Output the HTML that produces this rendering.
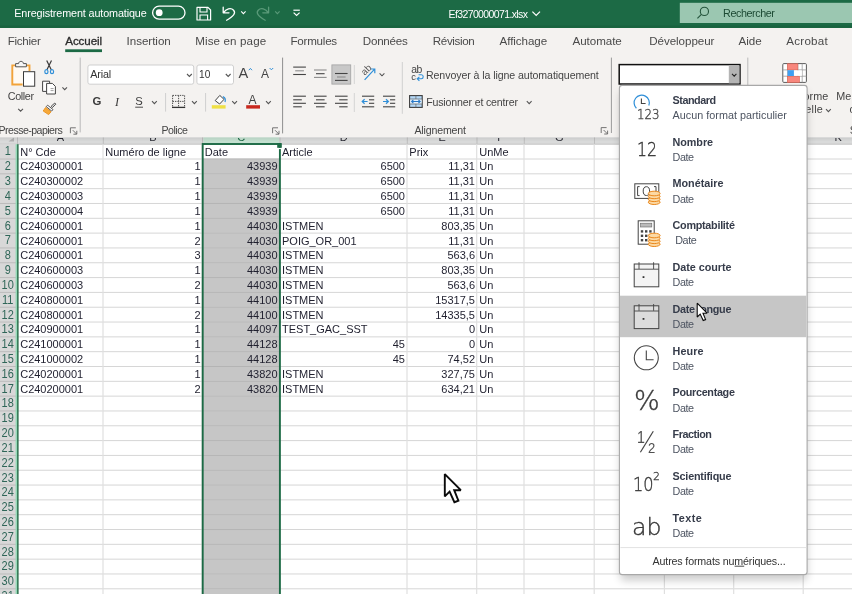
<!DOCTYPE html>
<html lang="fr"><head><meta charset="utf-8"><title>Ef3270000071.xlsx - Excel</title>
<style>
html,body{margin:0;padding:0;}
body{width:852px;height:594px;overflow:hidden;position:relative;background:#fff;font-family:"Liberation Sans", sans-serif;}
.ly{position:absolute;left:0;top:0;width:852px;height:594px;overflow:hidden;}
.ly svg{position:absolute;left:0;top:0;}
.t{position:absolute;white-space:pre;line-height:1;}
.ly{will-change:transform;}
</style></head><body>
<div class="ly" id="grid" style="">
<svg width="852" height="594" viewBox="0 0 852 594">
<rect x="0.00" y="128.00" width="852.00" height="16.20" fill="#d9dada" />
<rect x="203.40" y="128.00" width="75.80" height="16.20" fill="#c4e0d0" />
<line x1="17.50" y1="128.00" x2="17.50" y2="144.20" stroke="#bdbdbd" stroke-width="1" />
<line x1="103.30" y1="128.00" x2="103.30" y2="144.20" stroke="#bdbdbd" stroke-width="1" />
<line x1="202.50" y1="128.00" x2="202.50" y2="144.20" stroke="#bdbdbd" stroke-width="1" />
<line x1="280.00" y1="128.00" x2="280.00" y2="144.20" stroke="#bdbdbd" stroke-width="1" />
<line x1="407.30" y1="128.00" x2="407.30" y2="144.20" stroke="#bdbdbd" stroke-width="1" />
<line x1="477.00" y1="128.00" x2="477.00" y2="144.20" stroke="#bdbdbd" stroke-width="1" />
<line x1="524.30" y1="128.00" x2="524.30" y2="144.20" stroke="#bdbdbd" stroke-width="1" />
<line x1="594.50" y1="128.00" x2="594.50" y2="144.20" stroke="#bdbdbd" stroke-width="1" />
<line x1="664.70" y1="128.00" x2="664.70" y2="144.20" stroke="#bdbdbd" stroke-width="1" />
<line x1="734.00" y1="128.00" x2="734.00" y2="144.20" stroke="#bdbdbd" stroke-width="1" />
<line x1="803.50" y1="128.00" x2="803.50" y2="144.20" stroke="#bdbdbd" stroke-width="1" />
<line x1="873.00" y1="128.00" x2="873.00" y2="144.20" stroke="#bdbdbd" stroke-width="1" />
<line x1="0.00" y1="144.20" x2="852.00" y2="144.20" stroke="#c4c4c4" stroke-width="1" />
<rect x="0.00" y="144.20" width="17.50" height="449.80" fill="#d8d8d8" />
<path d="M14 137.5 L14 141.5 L8.5 141.5 Z" stroke="none" stroke-width="1" fill="#b0b0b0" />
<rect x="202.50" y="159.02" width="77.50" height="434.98" fill="#c6c6c6" />
<line x1="17.50" y1="159.02" x2="852.00" y2="159.02" stroke="#d6d6d6" stroke-width="1" />
<line x1="0.00" y1="159.02" x2="17.50" y2="159.02" stroke="#bcbcbc" stroke-width="1" />
<line x1="202.50" y1="159.02" x2="280.00" y2="159.02" stroke="#b4b4b4" stroke-width="1" />
<line x1="17.50" y1="173.84" x2="852.00" y2="173.84" stroke="#d6d6d6" stroke-width="1" />
<line x1="0.00" y1="173.84" x2="17.50" y2="173.84" stroke="#bcbcbc" stroke-width="1" />
<line x1="202.50" y1="173.84" x2="280.00" y2="173.84" stroke="#b4b4b4" stroke-width="1" />
<line x1="17.50" y1="188.66" x2="852.00" y2="188.66" stroke="#d6d6d6" stroke-width="1" />
<line x1="0.00" y1="188.66" x2="17.50" y2="188.66" stroke="#bcbcbc" stroke-width="1" />
<line x1="202.50" y1="188.66" x2="280.00" y2="188.66" stroke="#b4b4b4" stroke-width="1" />
<line x1="17.50" y1="203.48" x2="852.00" y2="203.48" stroke="#d6d6d6" stroke-width="1" />
<line x1="0.00" y1="203.48" x2="17.50" y2="203.48" stroke="#bcbcbc" stroke-width="1" />
<line x1="202.50" y1="203.48" x2="280.00" y2="203.48" stroke="#b4b4b4" stroke-width="1" />
<line x1="17.50" y1="218.30" x2="852.00" y2="218.30" stroke="#d6d6d6" stroke-width="1" />
<line x1="0.00" y1="218.30" x2="17.50" y2="218.30" stroke="#bcbcbc" stroke-width="1" />
<line x1="202.50" y1="218.30" x2="280.00" y2="218.30" stroke="#b4b4b4" stroke-width="1" />
<line x1="17.50" y1="233.12" x2="852.00" y2="233.12" stroke="#d6d6d6" stroke-width="1" />
<line x1="0.00" y1="233.12" x2="17.50" y2="233.12" stroke="#bcbcbc" stroke-width="1" />
<line x1="202.50" y1="233.12" x2="280.00" y2="233.12" stroke="#b4b4b4" stroke-width="1" />
<line x1="17.50" y1="247.94" x2="852.00" y2="247.94" stroke="#d6d6d6" stroke-width="1" />
<line x1="0.00" y1="247.94" x2="17.50" y2="247.94" stroke="#bcbcbc" stroke-width="1" />
<line x1="202.50" y1="247.94" x2="280.00" y2="247.94" stroke="#b4b4b4" stroke-width="1" />
<line x1="17.50" y1="262.76" x2="852.00" y2="262.76" stroke="#d6d6d6" stroke-width="1" />
<line x1="0.00" y1="262.76" x2="17.50" y2="262.76" stroke="#bcbcbc" stroke-width="1" />
<line x1="202.50" y1="262.76" x2="280.00" y2="262.76" stroke="#b4b4b4" stroke-width="1" />
<line x1="17.50" y1="277.58" x2="852.00" y2="277.58" stroke="#d6d6d6" stroke-width="1" />
<line x1="0.00" y1="277.58" x2="17.50" y2="277.58" stroke="#bcbcbc" stroke-width="1" />
<line x1="202.50" y1="277.58" x2="280.00" y2="277.58" stroke="#b4b4b4" stroke-width="1" />
<line x1="17.50" y1="292.40" x2="852.00" y2="292.40" stroke="#d6d6d6" stroke-width="1" />
<line x1="0.00" y1="292.40" x2="17.50" y2="292.40" stroke="#bcbcbc" stroke-width="1" />
<line x1="202.50" y1="292.40" x2="280.00" y2="292.40" stroke="#b4b4b4" stroke-width="1" />
<line x1="17.50" y1="307.22" x2="852.00" y2="307.22" stroke="#d6d6d6" stroke-width="1" />
<line x1="0.00" y1="307.22" x2="17.50" y2="307.22" stroke="#bcbcbc" stroke-width="1" />
<line x1="202.50" y1="307.22" x2="280.00" y2="307.22" stroke="#b4b4b4" stroke-width="1" />
<line x1="17.50" y1="322.04" x2="852.00" y2="322.04" stroke="#d6d6d6" stroke-width="1" />
<line x1="0.00" y1="322.04" x2="17.50" y2="322.04" stroke="#bcbcbc" stroke-width="1" />
<line x1="202.50" y1="322.04" x2="280.00" y2="322.04" stroke="#b4b4b4" stroke-width="1" />
<line x1="17.50" y1="336.86" x2="852.00" y2="336.86" stroke="#d6d6d6" stroke-width="1" />
<line x1="0.00" y1="336.86" x2="17.50" y2="336.86" stroke="#bcbcbc" stroke-width="1" />
<line x1="202.50" y1="336.86" x2="280.00" y2="336.86" stroke="#b4b4b4" stroke-width="1" />
<line x1="17.50" y1="351.68" x2="852.00" y2="351.68" stroke="#d6d6d6" stroke-width="1" />
<line x1="0.00" y1="351.68" x2="17.50" y2="351.68" stroke="#bcbcbc" stroke-width="1" />
<line x1="202.50" y1="351.68" x2="280.00" y2="351.68" stroke="#b4b4b4" stroke-width="1" />
<line x1="17.50" y1="366.50" x2="852.00" y2="366.50" stroke="#d6d6d6" stroke-width="1" />
<line x1="0.00" y1="366.50" x2="17.50" y2="366.50" stroke="#bcbcbc" stroke-width="1" />
<line x1="202.50" y1="366.50" x2="280.00" y2="366.50" stroke="#b4b4b4" stroke-width="1" />
<line x1="17.50" y1="381.32" x2="852.00" y2="381.32" stroke="#d6d6d6" stroke-width="1" />
<line x1="0.00" y1="381.32" x2="17.50" y2="381.32" stroke="#bcbcbc" stroke-width="1" />
<line x1="202.50" y1="381.32" x2="280.00" y2="381.32" stroke="#b4b4b4" stroke-width="1" />
<line x1="17.50" y1="396.14" x2="852.00" y2="396.14" stroke="#d6d6d6" stroke-width="1" />
<line x1="0.00" y1="396.14" x2="17.50" y2="396.14" stroke="#bcbcbc" stroke-width="1" />
<line x1="202.50" y1="396.14" x2="280.00" y2="396.14" stroke="#b4b4b4" stroke-width="1" />
<line x1="17.50" y1="410.96" x2="852.00" y2="410.96" stroke="#d6d6d6" stroke-width="1" />
<line x1="0.00" y1="410.96" x2="17.50" y2="410.96" stroke="#bcbcbc" stroke-width="1" />
<line x1="202.50" y1="410.96" x2="280.00" y2="410.96" stroke="#b4b4b4" stroke-width="1" />
<line x1="17.50" y1="425.78" x2="852.00" y2="425.78" stroke="#d6d6d6" stroke-width="1" />
<line x1="0.00" y1="425.78" x2="17.50" y2="425.78" stroke="#bcbcbc" stroke-width="1" />
<line x1="202.50" y1="425.78" x2="280.00" y2="425.78" stroke="#b4b4b4" stroke-width="1" />
<line x1="17.50" y1="440.60" x2="852.00" y2="440.60" stroke="#d6d6d6" stroke-width="1" />
<line x1="0.00" y1="440.60" x2="17.50" y2="440.60" stroke="#bcbcbc" stroke-width="1" />
<line x1="202.50" y1="440.60" x2="280.00" y2="440.60" stroke="#b4b4b4" stroke-width="1" />
<line x1="17.50" y1="455.42" x2="852.00" y2="455.42" stroke="#d6d6d6" stroke-width="1" />
<line x1="0.00" y1="455.42" x2="17.50" y2="455.42" stroke="#bcbcbc" stroke-width="1" />
<line x1="202.50" y1="455.42" x2="280.00" y2="455.42" stroke="#b4b4b4" stroke-width="1" />
<line x1="17.50" y1="470.24" x2="852.00" y2="470.24" stroke="#d6d6d6" stroke-width="1" />
<line x1="0.00" y1="470.24" x2="17.50" y2="470.24" stroke="#bcbcbc" stroke-width="1" />
<line x1="202.50" y1="470.24" x2="280.00" y2="470.24" stroke="#b4b4b4" stroke-width="1" />
<line x1="17.50" y1="485.06" x2="852.00" y2="485.06" stroke="#d6d6d6" stroke-width="1" />
<line x1="0.00" y1="485.06" x2="17.50" y2="485.06" stroke="#bcbcbc" stroke-width="1" />
<line x1="202.50" y1="485.06" x2="280.00" y2="485.06" stroke="#b4b4b4" stroke-width="1" />
<line x1="17.50" y1="499.88" x2="852.00" y2="499.88" stroke="#d6d6d6" stroke-width="1" />
<line x1="0.00" y1="499.88" x2="17.50" y2="499.88" stroke="#bcbcbc" stroke-width="1" />
<line x1="202.50" y1="499.88" x2="280.00" y2="499.88" stroke="#b4b4b4" stroke-width="1" />
<line x1="17.50" y1="514.70" x2="852.00" y2="514.70" stroke="#d6d6d6" stroke-width="1" />
<line x1="0.00" y1="514.70" x2="17.50" y2="514.70" stroke="#bcbcbc" stroke-width="1" />
<line x1="202.50" y1="514.70" x2="280.00" y2="514.70" stroke="#b4b4b4" stroke-width="1" />
<line x1="17.50" y1="529.52" x2="852.00" y2="529.52" stroke="#d6d6d6" stroke-width="1" />
<line x1="0.00" y1="529.52" x2="17.50" y2="529.52" stroke="#bcbcbc" stroke-width="1" />
<line x1="202.50" y1="529.52" x2="280.00" y2="529.52" stroke="#b4b4b4" stroke-width="1" />
<line x1="17.50" y1="544.34" x2="852.00" y2="544.34" stroke="#d6d6d6" stroke-width="1" />
<line x1="0.00" y1="544.34" x2="17.50" y2="544.34" stroke="#bcbcbc" stroke-width="1" />
<line x1="202.50" y1="544.34" x2="280.00" y2="544.34" stroke="#b4b4b4" stroke-width="1" />
<line x1="17.50" y1="559.16" x2="852.00" y2="559.16" stroke="#d6d6d6" stroke-width="1" />
<line x1="0.00" y1="559.16" x2="17.50" y2="559.16" stroke="#bcbcbc" stroke-width="1" />
<line x1="202.50" y1="559.16" x2="280.00" y2="559.16" stroke="#b4b4b4" stroke-width="1" />
<line x1="17.50" y1="573.98" x2="852.00" y2="573.98" stroke="#d6d6d6" stroke-width="1" />
<line x1="0.00" y1="573.98" x2="17.50" y2="573.98" stroke="#bcbcbc" stroke-width="1" />
<line x1="202.50" y1="573.98" x2="280.00" y2="573.98" stroke="#b4b4b4" stroke-width="1" />
<line x1="17.50" y1="588.80" x2="852.00" y2="588.80" stroke="#d6d6d6" stroke-width="1" />
<line x1="0.00" y1="588.80" x2="17.50" y2="588.80" stroke="#bcbcbc" stroke-width="1" />
<line x1="202.50" y1="588.80" x2="280.00" y2="588.80" stroke="#b4b4b4" stroke-width="1" />
<line x1="17.50" y1="603.62" x2="852.00" y2="603.62" stroke="#d6d6d6" stroke-width="1" />
<line x1="0.00" y1="603.62" x2="17.50" y2="603.62" stroke="#bcbcbc" stroke-width="1" />
<line x1="202.50" y1="603.62" x2="280.00" y2="603.62" stroke="#b4b4b4" stroke-width="1" />
<line x1="103.00" y1="144.20" x2="103.00" y2="594.00" stroke="#dfdfdf" stroke-width="1.2" />
<line x1="202.20" y1="144.20" x2="202.20" y2="594.00" stroke="#dfdfdf" stroke-width="1.2" />
<line x1="279.70" y1="144.20" x2="279.70" y2="594.00" stroke="#dfdfdf" stroke-width="1.2" />
<line x1="407.00" y1="144.20" x2="407.00" y2="594.00" stroke="#dfdfdf" stroke-width="1.2" />
<line x1="476.70" y1="144.20" x2="476.70" y2="594.00" stroke="#dfdfdf" stroke-width="1.2" />
<line x1="524.00" y1="144.20" x2="524.00" y2="594.00" stroke="#dfdfdf" stroke-width="1.2" />
<line x1="594.20" y1="144.20" x2="594.20" y2="594.00" stroke="#dfdfdf" stroke-width="1.2" />
<line x1="664.40" y1="144.20" x2="664.40" y2="594.00" stroke="#dfdfdf" stroke-width="1.2" />
<line x1="733.70" y1="144.20" x2="733.70" y2="594.00" stroke="#dfdfdf" stroke-width="1.2" />
<line x1="803.20" y1="144.20" x2="803.20" y2="594.00" stroke="#dfdfdf" stroke-width="1.2" />
<line x1="872.70" y1="144.20" x2="872.70" y2="594.00" stroke="#dfdfdf" stroke-width="1.2" />
<rect x="15.60" y="144.20" width="1.60" height="449.80" fill="#93d9b6" />
<rect x="17.10" y="144.20" width="1.50" height="449.80" fill="#2b704d" />
<rect x="202.70" y="144.00" width="77.20" height="460.00" fill="none" stroke="#1c6a45" stroke-width="1.9"/>
<rect x="278.60" y="147.80" width="2.80" height="1.30" fill="#fff" />
<rect x="277.20" y="143.10" width="4.60" height="4.70" fill="#1c6a45" />
</svg>
<span class="t" style="font-size:11px;color:#2a2a33;left:56.73px;top:131.59px;clip-path:inset(6.5px 0 0 0);">A</span>
<span class="t" style="font-size:11px;color:#2a2a33;left:149.23px;top:131.59px;clip-path:inset(6.5px 0 0 0);">B</span>
<span class="t" style="font-size:11px;color:#1c6a45;left:237.27px;top:131.59px;clip-path:inset(6.5px 0 0 0);">C</span>
<span class="t" style="font-size:11px;color:#2a2a33;left:339.67px;top:131.59px;clip-path:inset(6.5px 0 0 0);">D</span>
<span class="t" style="font-size:11px;color:#2a2a33;left:438.48px;top:131.59px;clip-path:inset(6.5px 0 0 0);">E</span>
<span class="t" style="font-size:11px;color:#2a2a33;left:497.28px;top:131.59px;clip-path:inset(6.5px 0 0 0);">F</span>
<span class="t" style="font-size:11px;color:#2a2a33;left:555.12px;top:131.59px;clip-path:inset(6.5px 0 0 0);">G</span>
<span class="t" style="font-size:11px;color:#2a2a33;left:625.62px;top:131.59px;clip-path:inset(6.5px 0 0 0);">H</span>
<span class="t" style="font-size:11px;color:#2a2a33;left:697.82px;top:131.59px;clip-path:inset(6.5px 0 0 0);">I</span>
<span class="t" style="font-size:11px;color:#2a2a33;left:766.00px;top:131.59px;clip-path:inset(6.5px 0 0 0);">J</span>
<span class="t" style="font-size:11px;color:#2a2a33;left:834.58px;top:131.59px;clip-path:inset(6.5px 0 0 0);">K</span>
<span class="t" style="font-size:11px;color:#2f6658;left:4.64px;top:146.49px;transform:scaleY(1.09);transform-origin:0 84.65%;">1</span>
<span class="t" style="font-size:11px;color:#2f6658;left:4.64px;top:161.31px;transform:scaleY(1.09);transform-origin:0 84.65%;">2</span>
<span class="t" style="font-size:11px;color:#2f6658;left:4.64px;top:176.13px;transform:scaleY(1.09);transform-origin:0 84.65%;">3</span>
<span class="t" style="font-size:11px;color:#2f6658;left:4.64px;top:190.95px;transform:scaleY(1.09);transform-origin:0 84.65%;">4</span>
<span class="t" style="font-size:11px;color:#2f6658;left:4.64px;top:205.77px;transform:scaleY(1.09);transform-origin:0 84.65%;">5</span>
<span class="t" style="font-size:11px;color:#2f6658;left:4.64px;top:220.59px;transform:scaleY(1.09);transform-origin:0 84.65%;">6</span>
<span class="t" style="font-size:11px;color:#2f6658;left:4.64px;top:235.41px;transform:scaleY(1.09);transform-origin:0 84.65%;">7</span>
<span class="t" style="font-size:11px;color:#2f6658;left:4.64px;top:250.23px;transform:scaleY(1.09);transform-origin:0 84.65%;">8</span>
<span class="t" style="font-size:11px;color:#2f6658;left:4.64px;top:265.05px;transform:scaleY(1.09);transform-origin:0 84.65%;">9</span>
<span class="t" style="font-size:11px;color:#2f6658;left:1.58px;top:279.87px;transform:scaleY(1.09);transform-origin:0 84.65%;">10</span>
<span class="t" style="font-size:11px;color:#2f6658;left:1.99px;top:294.69px;transform:scaleY(1.09);transform-origin:0 84.65%;">11</span>
<span class="t" style="font-size:11px;color:#2f6658;left:1.58px;top:309.51px;transform:scaleY(1.09);transform-origin:0 84.65%;">12</span>
<span class="t" style="font-size:11px;color:#2f6658;left:1.58px;top:324.33px;transform:scaleY(1.09);transform-origin:0 84.65%;">13</span>
<span class="t" style="font-size:11px;color:#2f6658;left:1.58px;top:339.15px;transform:scaleY(1.09);transform-origin:0 84.65%;">14</span>
<span class="t" style="font-size:11px;color:#2f6658;left:1.58px;top:353.97px;transform:scaleY(1.09);transform-origin:0 84.65%;">15</span>
<span class="t" style="font-size:11px;color:#2f6658;left:1.58px;top:368.79px;transform:scaleY(1.09);transform-origin:0 84.65%;">16</span>
<span class="t" style="font-size:11px;color:#2f6658;left:1.58px;top:383.61px;transform:scaleY(1.09);transform-origin:0 84.65%;">17</span>
<span class="t" style="font-size:11px;color:#2f6658;left:1.58px;top:398.43px;transform:scaleY(1.09);transform-origin:0 84.65%;">18</span>
<span class="t" style="font-size:11px;color:#2f6658;left:1.58px;top:413.25px;transform:scaleY(1.09);transform-origin:0 84.65%;">19</span>
<span class="t" style="font-size:11px;color:#2f6658;left:1.58px;top:428.07px;transform:scaleY(1.09);transform-origin:0 84.65%;">20</span>
<span class="t" style="font-size:11px;color:#2f6658;left:1.58px;top:442.89px;transform:scaleY(1.09);transform-origin:0 84.65%;">21</span>
<span class="t" style="font-size:11px;color:#2f6658;left:1.58px;top:457.71px;transform:scaleY(1.09);transform-origin:0 84.65%;">22</span>
<span class="t" style="font-size:11px;color:#2f6658;left:1.58px;top:472.53px;transform:scaleY(1.09);transform-origin:0 84.65%;">23</span>
<span class="t" style="font-size:11px;color:#2f6658;left:1.58px;top:487.35px;transform:scaleY(1.09);transform-origin:0 84.65%;">24</span>
<span class="t" style="font-size:11px;color:#2f6658;left:1.58px;top:502.17px;transform:scaleY(1.09);transform-origin:0 84.65%;">25</span>
<span class="t" style="font-size:11px;color:#2f6658;left:1.58px;top:516.99px;transform:scaleY(1.09);transform-origin:0 84.65%;">26</span>
<span class="t" style="font-size:11px;color:#2f6658;left:1.58px;top:531.81px;transform:scaleY(1.09);transform-origin:0 84.65%;">27</span>
<span class="t" style="font-size:11px;color:#2f6658;left:1.58px;top:546.63px;transform:scaleY(1.09);transform-origin:0 84.65%;">28</span>
<span class="t" style="font-size:11px;color:#2f6658;left:1.58px;top:561.45px;transform:scaleY(1.09);transform-origin:0 84.65%;">29</span>
<span class="t" style="font-size:11px;color:#2f6658;left:1.58px;top:576.27px;transform:scaleY(1.09);transform-origin:0 84.65%;">30</span>
<span class="t" style="font-size:11px;color:#2f6658;left:1.58px;top:591.09px;transform:scaleY(1.09);transform-origin:0 84.65%;">31</span>
<span class="t" style="font-size:11px;color:#1f1f2e;left:20.20px;top:146.59px;">N° Cde</span>
<span class="t" style="font-size:11px;color:#1f1f2e;left:105.30px;top:146.59px;">Numéro de ligne</span>
<span class="t" style="font-size:11px;color:#1f1f2e;left:204.80px;top:146.59px;">Date</span>
<span class="t" style="font-size:11px;color:#1f1f2e;left:282.00px;top:146.59px;">Article</span>
<span class="t" style="font-size:11px;color:#1f1f2e;left:409.30px;top:146.59px;">Prix</span>
<span class="t" style="font-size:11px;color:#1f1f2e;left:479.20px;top:146.59px;">UnMe</span>
<span class="t" style="font-size:11px;color:#1f1f2e;left:20.20px;top:161.41px;">C240300001</span>
<span class="t" style="font-size:11px;color:#1f1f2e;left:194.47px;top:161.41px;">1</span>
<span class="t" style="font-size:11px;color:#1f1f2e;left:247.01px;top:161.41px;">43939</span>
<span class="t" style="font-size:11px;color:#1f1f2e;left:380.52px;top:161.41px;">6500</span>
<span class="t" style="font-size:11px;color:#1f1f2e;left:448.28px;top:161.41px;">11,31</span>
<span class="t" style="font-size:11px;color:#1f1f2e;left:479.20px;top:161.41px;">Un</span>
<span class="t" style="font-size:11px;color:#1f1f2e;left:20.20px;top:176.23px;">C240300002</span>
<span class="t" style="font-size:11px;color:#1f1f2e;left:194.47px;top:176.23px;">1</span>
<span class="t" style="font-size:11px;color:#1f1f2e;left:247.01px;top:176.23px;">43939</span>
<span class="t" style="font-size:11px;color:#1f1f2e;left:380.52px;top:176.23px;">6500</span>
<span class="t" style="font-size:11px;color:#1f1f2e;left:448.28px;top:176.23px;">11,31</span>
<span class="t" style="font-size:11px;color:#1f1f2e;left:479.20px;top:176.23px;">Un</span>
<span class="t" style="font-size:11px;color:#1f1f2e;left:20.20px;top:191.05px;">C240300003</span>
<span class="t" style="font-size:11px;color:#1f1f2e;left:194.47px;top:191.05px;">1</span>
<span class="t" style="font-size:11px;color:#1f1f2e;left:247.01px;top:191.05px;">43939</span>
<span class="t" style="font-size:11px;color:#1f1f2e;left:380.52px;top:191.05px;">6500</span>
<span class="t" style="font-size:11px;color:#1f1f2e;left:448.28px;top:191.05px;">11,31</span>
<span class="t" style="font-size:11px;color:#1f1f2e;left:479.20px;top:191.05px;">Un</span>
<span class="t" style="font-size:11px;color:#1f1f2e;left:20.20px;top:205.87px;">C240300004</span>
<span class="t" style="font-size:11px;color:#1f1f2e;left:194.47px;top:205.87px;">1</span>
<span class="t" style="font-size:11px;color:#1f1f2e;left:247.01px;top:205.87px;">43939</span>
<span class="t" style="font-size:11px;color:#1f1f2e;left:380.52px;top:205.87px;">6500</span>
<span class="t" style="font-size:11px;color:#1f1f2e;left:448.28px;top:205.87px;">11,31</span>
<span class="t" style="font-size:11px;color:#1f1f2e;left:479.20px;top:205.87px;">Un</span>
<span class="t" style="font-size:11px;color:#1f1f2e;left:20.20px;top:220.69px;">C240600001</span>
<span class="t" style="font-size:11px;color:#1f1f2e;left:194.47px;top:220.69px;">1</span>
<span class="t" style="font-size:11px;color:#1f1f2e;left:247.01px;top:220.69px;">44030</span>
<span class="t" style="font-size:11px;color:#1f1f2e;left:282.00px;top:220.69px;">ISTMEN</span>
<span class="t" style="font-size:11px;color:#1f1f2e;left:441.34px;top:220.69px;">803,35</span>
<span class="t" style="font-size:11px;color:#1f1f2e;left:479.20px;top:220.69px;">Un</span>
<span class="t" style="font-size:11px;color:#1f1f2e;left:20.20px;top:235.51px;">C240600001</span>
<span class="t" style="font-size:11px;color:#1f1f2e;left:194.47px;top:235.51px;">2</span>
<span class="t" style="font-size:11px;color:#1f1f2e;left:247.01px;top:235.51px;">44030</span>
<span class="t" style="font-size:11px;color:#1f1f2e;left:282.00px;top:235.51px;">POIG_OR_001</span>
<span class="t" style="font-size:11px;color:#1f1f2e;left:448.28px;top:235.51px;">11,31</span>
<span class="t" style="font-size:11px;color:#1f1f2e;left:479.20px;top:235.51px;">Un</span>
<span class="t" style="font-size:11px;color:#1f1f2e;left:20.20px;top:250.33px;">C240600001</span>
<span class="t" style="font-size:11px;color:#1f1f2e;left:194.47px;top:250.33px;">3</span>
<span class="t" style="font-size:11px;color:#1f1f2e;left:247.01px;top:250.33px;">44030</span>
<span class="t" style="font-size:11px;color:#1f1f2e;left:282.00px;top:250.33px;">ISTMEN</span>
<span class="t" style="font-size:11px;color:#1f1f2e;left:447.47px;top:250.33px;">563,6</span>
<span class="t" style="font-size:11px;color:#1f1f2e;left:479.20px;top:250.33px;">Un</span>
<span class="t" style="font-size:11px;color:#1f1f2e;left:20.20px;top:265.15px;">C240600003</span>
<span class="t" style="font-size:11px;color:#1f1f2e;left:194.47px;top:265.15px;">1</span>
<span class="t" style="font-size:11px;color:#1f1f2e;left:247.01px;top:265.15px;">44030</span>
<span class="t" style="font-size:11px;color:#1f1f2e;left:282.00px;top:265.15px;">ISTMEN</span>
<span class="t" style="font-size:11px;color:#1f1f2e;left:441.34px;top:265.15px;">803,35</span>
<span class="t" style="font-size:11px;color:#1f1f2e;left:479.20px;top:265.15px;">Un</span>
<span class="t" style="font-size:11px;color:#1f1f2e;left:20.20px;top:279.97px;">C240600003</span>
<span class="t" style="font-size:11px;color:#1f1f2e;left:194.47px;top:279.97px;">2</span>
<span class="t" style="font-size:11px;color:#1f1f2e;left:247.01px;top:279.97px;">44030</span>
<span class="t" style="font-size:11px;color:#1f1f2e;left:282.00px;top:279.97px;">ISTMEN</span>
<span class="t" style="font-size:11px;color:#1f1f2e;left:447.47px;top:279.97px;">563,6</span>
<span class="t" style="font-size:11px;color:#1f1f2e;left:479.20px;top:279.97px;">Un</span>
<span class="t" style="font-size:11px;color:#1f1f2e;left:20.20px;top:294.79px;">C240800001</span>
<span class="t" style="font-size:11px;color:#1f1f2e;left:194.47px;top:294.79px;">1</span>
<span class="t" style="font-size:11px;color:#1f1f2e;left:247.01px;top:294.79px;">44100</span>
<span class="t" style="font-size:11px;color:#1f1f2e;left:282.00px;top:294.79px;">ISTMEN</span>
<span class="t" style="font-size:11px;color:#1f1f2e;left:435.23px;top:294.79px;">15317,5</span>
<span class="t" style="font-size:11px;color:#1f1f2e;left:479.20px;top:294.79px;">Un</span>
<span class="t" style="font-size:11px;color:#1f1f2e;left:20.20px;top:309.61px;">C240800001</span>
<span class="t" style="font-size:11px;color:#1f1f2e;left:194.47px;top:309.61px;">2</span>
<span class="t" style="font-size:11px;color:#1f1f2e;left:247.01px;top:309.61px;">44100</span>
<span class="t" style="font-size:11px;color:#1f1f2e;left:282.00px;top:309.61px;">ISTMEN</span>
<span class="t" style="font-size:11px;color:#1f1f2e;left:435.23px;top:309.61px;">14335,5</span>
<span class="t" style="font-size:11px;color:#1f1f2e;left:479.20px;top:309.61px;">Un</span>
<span class="t" style="font-size:11px;color:#1f1f2e;left:20.20px;top:324.43px;">C240900001</span>
<span class="t" style="font-size:11px;color:#1f1f2e;left:194.47px;top:324.43px;">1</span>
<span class="t" style="font-size:11px;color:#1f1f2e;left:247.01px;top:324.43px;">44097</span>
<span class="t" style="font-size:11px;color:#1f1f2e;left:282.00px;top:324.43px;">TEST_GAC_SST</span>
<span class="t" style="font-size:11px;color:#1f1f2e;left:468.88px;top:324.43px;">0</span>
<span class="t" style="font-size:11px;color:#1f1f2e;left:479.20px;top:324.43px;">Un</span>
<span class="t" style="font-size:11px;color:#1f1f2e;left:20.20px;top:339.25px;">C241000001</span>
<span class="t" style="font-size:11px;color:#1f1f2e;left:194.47px;top:339.25px;">1</span>
<span class="t" style="font-size:11px;color:#1f1f2e;left:247.01px;top:339.25px;">44128</span>
<span class="t" style="font-size:11px;color:#1f1f2e;left:392.75px;top:339.25px;">45</span>
<span class="t" style="font-size:11px;color:#1f1f2e;left:468.88px;top:339.25px;">0</span>
<span class="t" style="font-size:11px;color:#1f1f2e;left:479.20px;top:339.25px;">Un</span>
<span class="t" style="font-size:11px;color:#1f1f2e;left:20.20px;top:354.07px;">C241000002</span>
<span class="t" style="font-size:11px;color:#1f1f2e;left:194.47px;top:354.07px;">1</span>
<span class="t" style="font-size:11px;color:#1f1f2e;left:247.01px;top:354.07px;">44128</span>
<span class="t" style="font-size:11px;color:#1f1f2e;left:392.75px;top:354.07px;">45</span>
<span class="t" style="font-size:11px;color:#1f1f2e;left:447.47px;top:354.07px;">74,52</span>
<span class="t" style="font-size:11px;color:#1f1f2e;left:479.20px;top:354.07px;">Un</span>
<span class="t" style="font-size:11px;color:#1f1f2e;left:20.20px;top:368.89px;">C240200001</span>
<span class="t" style="font-size:11px;color:#1f1f2e;left:194.47px;top:368.89px;">1</span>
<span class="t" style="font-size:11px;color:#1f1f2e;left:247.01px;top:368.89px;">43820</span>
<span class="t" style="font-size:11px;color:#1f1f2e;left:282.00px;top:368.89px;">ISTMEN</span>
<span class="t" style="font-size:11px;color:#1f1f2e;left:441.34px;top:368.89px;">327,75</span>
<span class="t" style="font-size:11px;color:#1f1f2e;left:479.20px;top:368.89px;">Un</span>
<span class="t" style="font-size:11px;color:#1f1f2e;left:20.20px;top:383.71px;">C240200001</span>
<span class="t" style="font-size:11px;color:#1f1f2e;left:194.47px;top:383.71px;">2</span>
<span class="t" style="font-size:11px;color:#1f1f2e;left:247.01px;top:383.71px;">43820</span>
<span class="t" style="font-size:11px;color:#1f1f2e;left:282.00px;top:383.71px;">ISTMEN</span>
<span class="t" style="font-size:11px;color:#1f1f2e;left:441.34px;top:383.71px;">634,21</span>
<span class="t" style="font-size:11px;color:#1f1f2e;left:479.20px;top:383.71px;">Un</span>
</div>
<div class="ly" id="ribbon" style="">
<svg width="852" height="594" viewBox="0 0 852 594">
<defs><linearGradient id="rsh" x1="0" y1="0" x2="0" y2="1"><stop offset="0" stop-color="#000" stop-opacity="0.07"/><stop offset="1" stop-color="#000" stop-opacity="0"/></linearGradient></defs>
<rect x="0.00" y="137.30" width="852.00" height="4.00" fill="url(#rsh)" />
<rect x="0.00" y="0.00" width="852.00" height="137.30" fill="#f4f2f0" />
<rect x="0.00" y="0.00" width="852.00" height="27.90" fill="#1c6a45" />
<rect x="0.00" y="25.60" width="852.00" height="2.30" fill="#19633f" />
<rect x="152.6" y="6.2" width="32.4" height="13" rx="6.5" fill="none" stroke="#fff" stroke-width="1.3"/>
<circle cx="159.2" cy="12.7" r="3.4" fill="#fff"/>
<path d="M197 7.4 H208 L210.6 10 V20 H197 Z" stroke="#fff" stroke-width="1.2" fill="none" stroke-linejoin="round"/>
<path d="M200 7.6 V12 H207 V7.6" stroke="#fff" stroke-width="1.1" fill="none" />
<path d="M200 20 V15 H207.6 V20" stroke="#fff" stroke-width="1.1" fill="none" />
<path d="M223.2 7.2 V12.8 H229 M223.6 12.6 C226 8.6 231 7.4 233.6 10.2 C236 12.8 234 16 226.6 20.2" stroke="#fff" stroke-width="1.3" fill="none" stroke-linecap="round" stroke-linejoin="round"/>
<path d="M241.2 11.4 L243.4 13.6 L245.6 11.4" stroke="#fff" stroke-width="1.1" fill="none" />
<path d="M268.6 7.2 V12.8 H262.8 M268.2 12.6 C265.8 8.6 260.8 7.4 258.2 10.2 C255.8 12.8 257.8 16 265.2 20.2" stroke="#5a9a79" stroke-width="1.3" fill="none" stroke-linecap="round" stroke-linejoin="round"/>
<path d="M275.2 11.4 L277.4 13.6 L279.6 11.4" stroke="#5a9a79" stroke-width="1.1" fill="none" />
<path d="M293.4 10.2 H299.8" stroke="#fff" stroke-width="1.2" fill="none" />
<path d="M293.6 12.6 L296.6 15.4 L299.6 12.6" stroke="#fff" stroke-width="1.2" fill="none" />
<path d="M532.4 11.6 L536.2 15.4 L540 11.6" stroke="#fff" stroke-width="1.2" fill="none" />
<rect x="679.80" y="2.80" width="173.00" height="20.20" fill="#9bc7b1" />
<circle cx="704.4" cy="11.4" r="4.1" fill="none" stroke="#24543c" stroke-width="1.1"/>
<path d="M701.4 14.4 L697.4 18.4" stroke="#24543c" stroke-width="1.2" fill="none" />
<rect x="65.20" y="49.30" width="36.80" height="2.80" fill="#1c6a45" />
<rect x="12.20" y="65.40" width="17.40" height="19.20" fill="#fffaf3" />
<path d="M16.4 65.4 H12.3 V84.5 H22.6" stroke="#f2a33a" stroke-width="1.9" fill="none" />
<path d="M25.6 65.4 H29.5 V71" stroke="#f2a33a" stroke-width="1.9" fill="none" />
<path d="M15.6 66.8 V63.6 H18.6 C18.6 60.6 23.4 60.6 23.4 63.6 H26.4 V66.8 Z" stroke="#555" stroke-width="1.0" fill="#f6f6f6" />
<rect x="23.50" y="71.70" width="11.20" height="14.50" fill="#fff" stroke="#3a3a3a" stroke-width="1.0"/>
<path d="M18.2 108.8 L20.6 111.2 L23 108.8" stroke="#555" stroke-width="1.1" fill="none" />
<path d="M46.7 60.6 L51.4 70.0 M51.5 60.6 L46.8 70.0" stroke="#3a3a3a" stroke-width="1.2" fill="none" />
<ellipse cx="46.4" cy="71.7" rx="1.6" ry="2.0" fill="none" stroke="#2f8fd8" stroke-width="1.2"/>
<ellipse cx="52.0" cy="71.7" rx="1.6" ry="2.0" fill="none" stroke="#2f8fd8" stroke-width="1.2"/>
<path d="M46.4 91.4 H42.6 V81.2 H49.6 V83" stroke="#444" stroke-width="1.0" fill="#fff" />
<path d="M46.6 83.4 H52.4 L55.4 86.4 V94 H46.6 Z" stroke="#444" stroke-width="1.0" fill="#fff" />
<path d="M50.6 88.6 H53.6 M50.6 90.6 H53.6" stroke="#888" stroke-width="0.8" fill="none" />
<path d="M62.4 87.4 L64.7 89.7 L67 87.4" stroke="#555" stroke-width="1.1" fill="none" />
<path d="M51.2 106.2 L54.8 103 L55.8 104.2 L52.4 107.6 Z" stroke="#444" stroke-width="0.9" fill="#ddd" />
<path d="M47.6 105.2 L53 109.6 L51.6 111 L46.2 106.6 Z" stroke="#444" stroke-width="0.9" fill="#fff" />
<path d="M45.6 107.4 L51 111.8 L48.6 114.6 L43.2 111 Z" stroke="#e8901c" stroke-width="0.9" fill="#f6a93a" />
<path d="M70.4 133.2 V127.8 H75.8" stroke="#666" stroke-width="0.9" fill="none" />
<path d="M72.8 130.2 L76.6 134.0 M76.8 130.8 V134.2 H73.4" stroke="#666" stroke-width="0.9" fill="none" />
<line x1="80.20" y1="57.60" x2="80.20" y2="132.40" stroke="#b9b9b9" stroke-width="1" />
<rect x="87.9" y="65.0" width="105.8" height="19.2" rx="2" fill="#fff" stroke="#cfcfcf" stroke-width="1"/>
<path d="M187.0 74.0 L189.4 76.4 L191.8 74.0" stroke="#555" stroke-width="1.1" fill="none" />
<rect x="196.9" y="65.0" width="36.6" height="19.2" rx="2" fill="#fff" stroke="#cfcfcf" stroke-width="1"/>
<path d="M225.8 74.0 L228.2 76.4 L230.6 74.0" stroke="#555" stroke-width="1.1" fill="none" />
<path d="M248.8 70.2 L250.4 68.4 L252 70.2" stroke="#2f8fd8" stroke-width="1.0" fill="none" />
<path d="M269.6 68 L271.4 69.8 L273.2 68" stroke="#2f8fd8" stroke-width="1.0" fill="none" />
<line x1="135.20" y1="107.20" x2="143.00" y2="107.20" stroke="#3a3a3a" stroke-width="0.9" />
<path d="M152.0 101.2 L154.4 103.6 L156.8 101.2" stroke="#555" stroke-width="1.1" fill="none" />
<line x1="165.60" y1="93.00" x2="165.60" y2="111.60" stroke="#cfcfcf" stroke-width="1" />
<path d="M172.6 95.4 H184.6 M172.6 101.4 H184.6 M172.6 95.4 V107 M178.6 95.4 V107 M184.6 95.4 V107" stroke="#505050" stroke-width="1.0" fill="none" stroke-dasharray="1.4 1.0"/>
<line x1="172.00" y1="107.40" x2="185.20" y2="107.40" stroke="#333" stroke-width="1.3" />
<path d="M192.0 101.2 L194.4 103.6 L196.8 101.2" stroke="#555" stroke-width="1.1" fill="none" />
<line x1="205.60" y1="93.00" x2="205.60" y2="111.60" stroke="#cfcfcf" stroke-width="1" />
<path d="M219.8 95.4 L215.2 100.6 L219.6 104 L224 99.4 Z" stroke="#444" stroke-width="1.0" fill="#fff" />
<path d="M222.8 96.6 C225.4 97.6 225.6 100 225 102" stroke="#2f8fd8" stroke-width="1.2" fill="none" />
<rect x="211.80" y="105.20" width="13.80" height="3.40" fill="#efe045" />
<path d="M232.2 101.2 L234.6 103.6 L237.0 101.2" stroke="#555" stroke-width="1.1" fill="none" />
<rect x="246.20" y="105.20" width="13.80" height="3.40" fill="#c9291f" />
<path d="M266.0 101.2 L268.4 103.6 L270.8 101.2" stroke="#555" stroke-width="1.1" fill="none" />
<path d="M272.6 133.2 V127.8 H278.0" stroke="#666" stroke-width="0.9" fill="none" />
<path d="M275.0 130.2 L278.8 134.0 M279.0 130.8 V134.2 H275.6" stroke="#666" stroke-width="0.9" fill="none" />
<line x1="282.60" y1="57.60" x2="282.60" y2="133.40" stroke="#8f8f8f" stroke-width="1" />
<line x1="293.20" y1="67.10" x2="305.90" y2="67.10" stroke="#444" stroke-width="1.1" />
<line x1="295.20" y1="70.80" x2="303.90" y2="70.80" stroke="#8c8c8c" stroke-width="1.1" />
<line x1="293.20" y1="74.50" x2="305.90" y2="74.50" stroke="#444" stroke-width="1.1" />
<line x1="314.00" y1="70.00" x2="326.60" y2="70.00" stroke="#8c8c8c" stroke-width="1.1" />
<line x1="316.00" y1="73.70" x2="324.60" y2="73.70" stroke="#444" stroke-width="1.1" />
<line x1="314.00" y1="77.40" x2="326.60" y2="77.40" stroke="#8c8c8c" stroke-width="1.1" />
<rect x="331.9" y="64.9" width="18.8" height="19.2" fill="#c8c8c8" stroke="#a6a6a6" stroke-width="0.9"/>
<line x1="335.00" y1="73.50" x2="347.60" y2="73.50" stroke="#444" stroke-width="1.1" />
<line x1="337.00" y1="77.00" x2="345.60" y2="77.00" stroke="#8c8c8c" stroke-width="1.1" />
<line x1="335.00" y1="80.40" x2="347.60" y2="80.40" stroke="#444" stroke-width="1.1" />
<line x1="354.30" y1="65.00" x2="354.30" y2="84.00" stroke="#d4d4d4" stroke-width="1" />
<path d="M364.6 79.8 L374.6 69.2 M370.6 69 H374.8 V73.2" stroke="#2f8fd8" stroke-width="1.2" fill="none" />
<path d="M379.6 73.4 L382.0 75.8 L384.4 73.4" stroke="#555" stroke-width="1.1" fill="none" />
<line x1="293.20" y1="96.20" x2="305.90" y2="96.20" stroke="#444" stroke-width="1.1" />
<line x1="293.20" y1="99.80" x2="301.80" y2="99.80" stroke="#444" stroke-width="1.1" />
<line x1="293.20" y1="103.30" x2="305.90" y2="103.30" stroke="#444" stroke-width="1.1" />
<line x1="293.20" y1="106.80" x2="301.80" y2="106.80" stroke="#444" stroke-width="1.1" />
<line x1="314.00" y1="96.20" x2="326.60" y2="96.20" stroke="#444" stroke-width="1.1" />
<line x1="316.00" y1="99.80" x2="324.60" y2="99.80" stroke="#444" stroke-width="1.1" />
<line x1="314.00" y1="103.30" x2="326.60" y2="103.30" stroke="#444" stroke-width="1.1" />
<line x1="316.00" y1="106.80" x2="324.60" y2="106.80" stroke="#444" stroke-width="1.1" />
<line x1="335.00" y1="96.20" x2="347.60" y2="96.20" stroke="#444" stroke-width="1.1" />
<line x1="339.20" y1="99.80" x2="347.60" y2="99.80" stroke="#444" stroke-width="1.1" />
<line x1="335.00" y1="103.30" x2="347.60" y2="103.30" stroke="#444" stroke-width="1.1" />
<line x1="339.20" y1="106.80" x2="347.60" y2="106.80" stroke="#444" stroke-width="1.1" />
<line x1="354.30" y1="93.00" x2="354.30" y2="112.00" stroke="#d4d4d4" stroke-width="1" />
<line x1="362.00" y1="96.20" x2="374.20" y2="96.20" stroke="#444" stroke-width="1.1" />
<line x1="369.00" y1="99.80" x2="374.20" y2="99.80" stroke="#444" stroke-width="1.1" />
<line x1="369.00" y1="103.30" x2="374.20" y2="103.30" stroke="#444" stroke-width="1.1" />
<line x1="362.00" y1="106.80" x2="374.20" y2="106.80" stroke="#444" stroke-width="1.1" />
<path d="M367.6 101.5 H362.4 M364.6 99.2 L362.2 101.5 L364.6 103.8" stroke="#2f8fd8" stroke-width="1.2" fill="none" />
<line x1="383.00" y1="96.20" x2="395.20" y2="96.20" stroke="#444" stroke-width="1.1" />
<line x1="390.00" y1="99.80" x2="395.20" y2="99.80" stroke="#444" stroke-width="1.1" />
<line x1="390.00" y1="103.30" x2="395.20" y2="103.30" stroke="#444" stroke-width="1.1" />
<line x1="383.00" y1="106.80" x2="395.20" y2="106.80" stroke="#444" stroke-width="1.1" />
<path d="M383 101.5 H388.2 M386 99.2 L388.4 101.5 L386 103.8" stroke="#2f8fd8" stroke-width="1.2" fill="none" />
<line x1="402.30" y1="62.00" x2="402.30" y2="113.80" stroke="#d0d0d0" stroke-width="1" />
<path d="M418.6 74.8 H421.4 C423.8 74.8 423.8 78.8 421.4 78.8 H417.6 M419.4 76.8 L417.2 78.8 L419.4 80.8" stroke="#2f8fd8" stroke-width="1.1" fill="none" />
<rect x="409.60" y="95.60" width="12.60" height="11.80" fill="#b4d8f6" stroke="#3c3c3c" stroke-width="1.1"/>
<rect x="410.20" y="99.20" width="11.40" height="4.60" fill="#e6f2fc" />
<path d="M409.6 99 H422.2 M409.6 104 H422.2 M415.9 95.6 V99 M415.9 104 V107.4" stroke="#666" stroke-width="0.7" fill="none" />
<path d="M411.6 101.5 H420.2 M413.4 99.8 L411.6 101.5 L413.4 103.2 M418.4 99.8 L420.2 101.5 L418.4 103.2" stroke="#2878c8" stroke-width="1.1" fill="none" />
<path d="M526.8 101.2 L529.2 103.6 L531.6 101.2" stroke="#555" stroke-width="1.1" fill="none" />
<path d="M601.2 133.0 V127.6 H606.6" stroke="#666" stroke-width="0.9" fill="none" />
<path d="M603.6 130.0 L607.4 133.8 M607.6 130.6 V134.0 H604.2" stroke="#666" stroke-width="0.9" fill="none" />
<line x1="611.40" y1="57.60" x2="611.40" y2="133.00" stroke="#9a9a9a" stroke-width="1" />
<rect x="619.2" y="64.6" width="120.8" height="19.4" fill="#fff" stroke="#111" stroke-width="1.5"/>
<rect x="728.80" y="65.40" width="10.60" height="17.90" fill="#b4b4b4" />
<path d="M732.0 73.9 L734.2 76.1 L736.4 73.9" stroke="#222" stroke-width="1.1" fill="none" />
<line x1="747.80" y1="57.60" x2="747.80" y2="133.00" stroke="#b9b9b9" stroke-width="1" />
<rect x="782.80" y="63.60" width="23.60" height="18.80" fill="#fff" stroke="#5a5a5a" stroke-width="1" rx="1"/>
<path d="M782.8 69.9 H806.4 M782.8 76.2 H806.4 M787.6 63.6 V82.4 M797.9 63.6 V82.4 M802.2 63.6 V82.4" stroke="#9a9a9a" stroke-width="0.8" fill="none" />
<rect x="787.60" y="63.80" width="10.20" height="6.00" fill="#f8877d" stroke="#e4604f" stroke-width="0.6"/>
<rect x="787.60" y="76.40" width="11.90" height="5.90" fill="#f8877d" stroke="#e4604f" stroke-width="0.6"/>
<rect x="787.60" y="70.20" width="6.30" height="5.80" fill="#3f9ff2" />
<rect x="794.20" y="70.40" width="7.60" height="5.40" fill="#fff" />
<path d="M826.0 109.2 L828.4 111.6 L830.8 109.2" stroke="#555" stroke-width="1.1" fill="none" />
</svg>
<span class="t" style="font-size:10.8px;color:#fff;letter-spacing:-0.127px;left:14.27px;top:8.26px;">Enregistrement automatique</span>
<span class="t" style="font-size:10.5px;color:#fff;letter-spacing:-0.624px;left:448.58px;top:8.91px;">Ef3270000071.xlsx</span>
<span class="t" style="font-size:10.8px;color:#1d4a34;letter-spacing:-0.439px;left:723.07px;top:7.66px;">Rechercher</span>
<span class="t" style="font-size:11.6px;color:#4a4a4a;letter-spacing:-0.311px;left:7.84px;top:35.18px;">Fichier</span>
<span class="t" style="font-size:11.6px;color:#2b2b2b;letter-spacing:-0.075px;left:65.24px;top:35.18px;-webkit-text-stroke:0.3px #2b2b2b;">Accueil</span>
<span class="t" style="font-size:11.6px;color:#4a4a4a;letter-spacing:-0.030px;left:126.54px;top:35.18px;">Insertion</span>
<span class="t" style="font-size:11.6px;color:#4a4a4a;letter-spacing:0.120px;left:195.24px;top:35.18px;">Mise en page</span>
<span class="t" style="font-size:11.6px;color:#4a4a4a;letter-spacing:-0.243px;left:290.54px;top:35.18px;">Formules</span>
<span class="t" style="font-size:11.6px;color:#4a4a4a;letter-spacing:-0.249px;left:362.84px;top:35.18px;">Données</span>
<span class="t" style="font-size:11.6px;color:#4a4a4a;letter-spacing:-0.363px;left:432.84px;top:35.18px;">Révision</span>
<span class="t" style="font-size:11.6px;color:#4a4a4a;letter-spacing:-0.064px;left:499.54px;top:35.18px;">Affichage</span>
<span class="t" style="font-size:11.6px;color:#4a4a4a;letter-spacing:-0.057px;left:572.54px;top:35.18px;">Automate</span>
<span class="t" style="font-size:11.6px;color:#4a4a4a;letter-spacing:-0.052px;left:649.24px;top:35.18px;">Développeur</span>
<span class="t" style="font-size:11.6px;color:#4a4a4a;letter-spacing:0.003px;left:738.54px;top:35.18px;">Aide</span>
<span class="t" style="font-size:11.6px;color:#4a4a4a;letter-spacing:0.260px;left:786.24px;top:35.18px;">Acrobat</span>
<span class="t" style="font-size:10.8px;color:#444;letter-spacing:-0.408px;left:7.87px;top:90.56px;">Coller</span>
<span class="t" style="font-size:10.6px;color:#444;letter-spacing:-0.546px;left:-1.42px;top:125.23px;">Presse-papiers</span>
<span class="t" style="font-size:10.8px;color:#333;letter-spacing:-0.186px;left:90.37px;top:69.46px;">Arial</span>
<span class="t" style="font-size:10.8px;color:#333;transform:scaleX(0.937);transform-origin:0 0;left:199.37px;top:69.46px;">10</span>
<span class="t" style="font-size:14.6px;color:#444;left:238.62px;top:65.94px;">A</span>
<span class="t" style="font-size:12.0px;color:#444;left:261.12px;top:68.14px;">A</span>
<span class="t" style="font-size:11.4px;color:#3a3a3a;font-weight:700;left:92.54px;top:96.05px;">G</span>
<span class="t" style="font-size:12px;color:#3a3a3a;font-style:italic;font-family:'Liberation Serif', serif;left:114.92px;top:95.84px;">I</span>
<span class="t" style="font-size:11.2px;color:#3a3a3a;left:135.35px;top:96.12px;">S</span>
<span class="t" style="font-size:12.0px;color:#444;left:248.52px;top:93.84px;">A</span>
<span class="t" style="font-size:10.6px;color:#444;letter-spacing:-0.522px;left:161.58px;top:125.43px;">Police</span>
<span class="t" style="font-size:9.5px;color:#555;left:0.00px;top:-8.04px;left:360.5px;top:64.5px;transform:rotate(-45deg);transform-origin:center;">ab</span>
<span class="t" style="font-size:10.4px;color:#444;letter-spacing:-0.431px;left:411.18px;top:65.10px;">ab</span>
<span class="t" style="font-size:9.4px;color:#444;left:411.22px;top:72.04px;">c</span>
<span class="t" style="font-size:10.6px;color:#444;letter-spacing:-0.078px;left:425.98px;top:69.73px;">Renvoyer à la ligne automatiquement</span>
<span class="t" style="font-size:10.6px;color:#444;letter-spacing:-0.156px;left:426.18px;top:97.23px;">Fusionner et centrer</span>
<span class="t" style="font-size:10.6px;color:#444;letter-spacing:-0.150px;left:414.38px;top:125.43px;">Alignement</span>
<span class="t" style="font-size:10.8px;color:#444;letter-spacing:0.052px;left:803.47px;top:90.56px;">orme</span>
<span class="t" style="font-size:10.8px;color:#444;left:836.20px;top:90.56px;">Me</span>
<span class="t" style="font-size:10.8px;color:#444;letter-spacing:0.284px;left:805.17px;top:104.26px;">elle</span>
<span class="t" style="font-size:10.8px;color:#444;left:849.60px;top:104.26px;">c</span>
<span class="t" style="font-size:10.6px;color:#444;left:849.80px;top:125.03px;">S</span>
</div>
<div class="ly" id="panel" style="">
<svg width="852" height="594" viewBox="0 0 852 594">
<defs><filter id="psh" x="-10%" y="-5%" width="120%" height="110%"><feGaussianBlur stdDeviation="4"/></filter></defs>
<rect x="620.4" y="91.4" width="186.70000000000005" height="489.20000000000005" rx="4" fill="#000" opacity="0.2" filter="url(#psh)"/>
<rect x="619.4" y="85.4" width="187.70000000000005" height="489.20000000000005" rx="2.8" fill="#fff" stroke="#a8a8a8" stroke-width="1.1"/>
<rect x="619.90" y="295.70" width="186.50" height="41.50" fill="#c6c6c6" />
<path d="M636.4 108.2 A7.6 7.6 0 1 1 648.8 105.5" stroke="#2f8fd8" stroke-width="1.2" fill="none" />
<path d="M641.4 98.4 V103.5 H645.6" stroke="#444" stroke-width="1.1" fill="none" />
<rect x="634.80" y="183.80" width="24.00" height="14.60" fill="#fff" stroke="#444" stroke-width="1"/>
<path d="M639.6 186.6 H637.6 V195.6 H639.6 M654 186.6 H656 V195.6 H654" stroke="#444" stroke-width="1.0" fill="none" />
<ellipse cx="646.4" cy="191.1" rx="3.2" ry="4.4" fill="none" stroke="#444" stroke-width="1"/>
<ellipse cx="654.2" cy="202.2" rx="5.9" ry="2.3" fill="#fcd9a4" stroke="#ea881c" stroke-width="1"/>
<ellipse cx="654.2" cy="199.3" rx="5.9" ry="2.3" fill="#fcd9a4" stroke="#ea881c" stroke-width="1"/>
<ellipse cx="654.2" cy="196.4" rx="5.9" ry="2.3" fill="#fcd9a4" stroke="#ea881c" stroke-width="1"/>
<ellipse cx="654.2" cy="193.5" rx="5.9" ry="2.3" fill="#fcd9a4" stroke="#ea881c" stroke-width="1"/>
<rect x="638.20" y="220.80" width="16.00" height="23.40" fill="#fff" stroke="#444" stroke-width="1"/>
<rect x="640.60" y="223.20" width="11.20" height="3.80" fill="#bbb" stroke="#666" stroke-width="0.6"/>
<rect x="640.80" y="230.20" width="2.40" height="2.40" fill="#444" />
<rect x="645.00" y="230.20" width="2.40" height="2.40" fill="#444" />
<rect x="649.20" y="230.20" width="2.40" height="2.40" fill="#444" />
<rect x="640.80" y="234.60" width="2.40" height="2.40" fill="#444" />
<rect x="645.00" y="234.60" width="2.40" height="2.40" fill="#444" />
<rect x="649.20" y="234.60" width="2.40" height="2.40" fill="#444" />
<rect x="640.80" y="239.00" width="2.40" height="2.40" fill="#444" />
<rect x="645.00" y="239.00" width="2.40" height="2.40" fill="#444" />
<rect x="649.20" y="239.00" width="2.40" height="2.40" fill="#444" />
<ellipse cx="654.2" cy="244.2" rx="5.9" ry="2.3" fill="#fcd9a4" stroke="#ea881c" stroke-width="1"/>
<ellipse cx="654.2" cy="241.3" rx="5.9" ry="2.3" fill="#fcd9a4" stroke="#ea881c" stroke-width="1"/>
<ellipse cx="654.2" cy="238.4" rx="5.9" ry="2.3" fill="#fcd9a4" stroke="#ea881c" stroke-width="1"/>
<ellipse cx="654.2" cy="235.5" rx="5.9" ry="2.3" fill="#fcd9a4" stroke="#ea881c" stroke-width="1"/>
<rect x="634.20" y="264.00" width="24.60" height="22.80" fill="#f4f4f4" stroke="#444" stroke-width="1"/>
<line x1="634.20" y1="269.20" x2="658.80" y2="269.20" stroke="#444" stroke-width="0.9" />
<line x1="639.00" y1="262.20" x2="639.00" y2="269.00" stroke="#444" stroke-width="0.9" />
<line x1="653.60" y1="262.20" x2="653.60" y2="269.00" stroke="#444" stroke-width="0.9" />
<rect x="642.60" y="276.20" width="1.80" height="1.80" fill="#333" />
<rect x="634.20" y="305.80" width="24.60" height="22.80" fill="#dcdcdc" stroke="#444" stroke-width="1"/>
<line x1="634.20" y1="311.00" x2="658.80" y2="311.00" stroke="#444" stroke-width="0.9" />
<line x1="639.00" y1="304.00" x2="639.00" y2="310.80" stroke="#444" stroke-width="0.9" />
<line x1="653.60" y1="304.00" x2="653.60" y2="310.80" stroke="#444" stroke-width="0.9" />
<rect x="642.60" y="318.00" width="1.80" height="1.80" fill="#333" />
<circle cx="646.3" cy="357.8" r="12" fill="none" stroke="#444" stroke-width="1.1"/>
<path d="M646.3 350.4 V359.8 H653.6" stroke="#444" stroke-width="1.1" fill="none" />
<line x1="640.40" y1="452.20" x2="653.30" y2="431.20" stroke="#444" stroke-width="1.2" />
<line x1="620.40" y1="547.60" x2="806.10" y2="547.60" stroke="#e2e2e2" stroke-width="1" />
<line x1="734.60" y1="566.20" x2="744.20" y2="566.20" stroke="#333" stroke-width="0.9" />
</svg>
<span class="t" style="font-size:10.8px;color:#363c4a;font-weight:700;letter-spacing:-0.476px;left:672.57px;top:94.76px;">Standard</span>
<span class="t" style="font-size:10.8px;color:#4c5360;letter-spacing:0.014px;left:672.57px;top:109.96px;">Aucun format particulier</span>
<span class="t" style="font-size:10.8px;color:#363c4a;font-weight:700;letter-spacing:-0.067px;left:672.57px;top:136.56px;">Nombre</span>
<span class="t" style="font-size:10.8px;color:#4c5360;letter-spacing:-0.449px;left:672.57px;top:151.76px;">Date</span>
<span class="t" style="font-size:10.8px;color:#363c4a;font-weight:700;letter-spacing:-0.017px;left:672.57px;top:178.36px;">Monétaire</span>
<span class="t" style="font-size:10.8px;color:#4c5360;letter-spacing:-0.449px;left:672.57px;top:193.56px;">Date</span>
<span class="t" style="font-size:10.8px;color:#363c4a;font-weight:700;letter-spacing:-0.275px;left:672.57px;top:220.16px;">Comptabilité</span>
<span class="t" style="font-size:10.8px;color:#4c5360;letter-spacing:-0.387px;left:672.57px;top:235.36px;"> Date</span>
<span class="t" style="font-size:10.8px;color:#363c4a;font-weight:700;letter-spacing:-0.054px;left:672.57px;top:261.96px;">Date courte</span>
<span class="t" style="font-size:10.8px;color:#4c5360;letter-spacing:-0.449px;left:672.57px;top:277.16px;">Date</span>
<span class="t" style="font-size:10.8px;color:#363c4a;font-weight:700;letter-spacing:-0.293px;left:672.57px;top:303.76px;">Date longue</span>
<span class="t" style="font-size:10.8px;color:#4c5360;letter-spacing:-0.449px;left:672.57px;top:318.96px;">Date</span>
<span class="t" style="font-size:10.8px;color:#363c4a;font-weight:700;letter-spacing:0.064px;left:672.57px;top:345.56px;">Heure</span>
<span class="t" style="font-size:10.8px;color:#4c5360;letter-spacing:-0.449px;left:672.57px;top:360.76px;">Date</span>
<span class="t" style="font-size:10.8px;color:#363c4a;font-weight:700;letter-spacing:-0.304px;left:672.57px;top:387.36px;">Pourcentage</span>
<span class="t" style="font-size:10.8px;color:#4c5360;letter-spacing:-0.449px;left:672.57px;top:402.56px;">Date</span>
<span class="t" style="font-size:10.8px;color:#363c4a;font-weight:700;letter-spacing:-0.461px;left:672.57px;top:429.16px;">Fraction</span>
<span class="t" style="font-size:10.8px;color:#4c5360;letter-spacing:-0.449px;left:672.57px;top:444.36px;">Date</span>
<span class="t" style="font-size:10.8px;color:#363c4a;font-weight:700;letter-spacing:-0.213px;left:672.57px;top:470.96px;">Scientifique</span>
<span class="t" style="font-size:10.8px;color:#4c5360;letter-spacing:-0.449px;left:672.57px;top:486.16px;">Date</span>
<span class="t" style="font-size:10.8px;color:#363c4a;font-weight:700;letter-spacing:0.464px;left:672.57px;top:512.76px;">Texte</span>
<span class="t" style="font-size:10.8px;color:#4c5360;letter-spacing:-0.449px;left:672.57px;top:527.96px;">Date</span>
<span class="t" style="font-size:13.6px;color:#4a4a4a;font-weight:200;font-family:'DejaVu Sans Light', 'DejaVu Sans', 'Liberation Sans', sans-serif;transform:scaleX(0.870);transform-origin:0 0;left:637.16px;top:107.69px;-webkit-text-stroke:0.4px currentColor;">123</span>
<span class="t" style="font-size:19.8px;color:#333;font-weight:200;font-family:'DejaVu Sans Light', 'DejaVu Sans', 'Liberation Sans', sans-serif;transform:scaleX(0.794);transform-origin:0 0;left:636.61px;top:140.15px;-webkit-text-stroke:0.4px currentColor;">12</span>
<span class="t" style="font-size:26.6px;color:#3a3a3a;font-weight:200;font-family:'DejaVu Sans Light', 'DejaVu Sans', 'Liberation Sans', sans-serif;transform:scaleX(1.018);transform-origin:0 0;left:633.54px;top:387.70px;-webkit-text-stroke:0.4px currentColor;">%</span>
<span class="t" style="font-size:15.8px;color:#505050;left:637.20px;top:430.13px;transform:scaleX(0.9);transform-origin:0 0;">1</span>
<span class="t" style="font-size:14.2px;color:#505050;left:648.00px;top:441.18px;transform:scaleX(0.92);transform-origin:0 0;">2</span>
<span class="t" style="font-size:19.8px;color:#3a3a3a;font-weight:200;font-family:'DejaVu Sans Light', 'DejaVu Sans', 'Liberation Sans', sans-serif;transform:scaleX(0.818);transform-origin:0 0;left:633.21px;top:474.85px;-webkit-text-stroke:0.4px currentColor;">10</span>
<span class="t" style="font-size:10.6px;color:#3a3a3a;font-weight:200;font-family:'DejaVu Sans Light', 'DejaVu Sans', 'Liberation Sans', sans-serif;transform:scaleX(1.029);transform-origin:0 0;left:653.18px;top:471.23px;-webkit-text-stroke:0.3px currentColor;">2</span>
<span class="t" style="font-size:23.0px;color:#3a3a3a;font-weight:200;font-family:'DejaVu Sans Light', 'DejaVu Sans', 'Liberation Sans', sans-serif;transform:scaleX(1.026);transform-origin:0 0;left:631.68px;top:515.94px;-webkit-text-stroke:0.4px currentColor;">ab</span>
<span class="t" style="font-size:10.7px;color:#333;letter-spacing:-0.154px;left:652.57px;top:555.54px;">Autres formats numériques...</span>
</div>
<div class="ly" id="cursors" style="">
<svg width="852" height="594" viewBox="0 0 852 594">
<path d="M444.8 474.1 L444.8 496.4 L449.6 491.6 L454.4 502.2 L458.4 500.6 L454.2 490.2 L460.8 490.2 Z" stroke="#0a0a0a" stroke-width="1.9" fill="#fff" stroke-linejoin="miter" stroke-miterlimit="2.2"/>
<path d="M697.2 303.2 L697.2 317.0 L700.2 314.1 L703.2 320.6 L705.6 319.6 L703.0 313.2 L707.1 313.2 Z" stroke="#0a0a0a" stroke-width="1.1" fill="#fff" stroke-linejoin="miter" stroke-miterlimit="2.2"/>
</svg>
</div>
</body></html>
